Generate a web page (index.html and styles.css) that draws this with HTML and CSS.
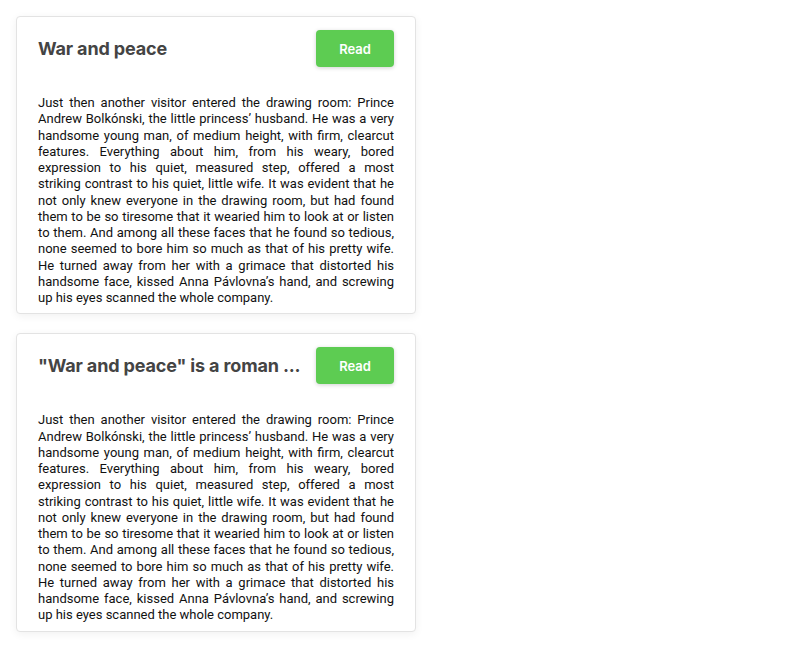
FILE: index.html
```html
<!DOCTYPE html>
<html>
<head>
<meta charset="utf-8">
<link rel="stylesheet" href="styles.css">
</head>
<body>
<div class="list">
  <div class="card">
    <div class="card-head">
      <h2 class="title">War and peace</h2>
      <button class="btn">Read</button>
    </div>
    <p class="text">Just then another visitor entered the drawing room: Prince Andrew Bolkónski, the little princess’ husband. He was a very handsome young man, of medium height, with firm, clearcut features. Everything about him, from his weary, bored expression to his quiet, measured step, offered a most striking contrast to his quiet, little wife. It was evident that he not only knew everyone in the drawing room, but had found them to be so tiresome that it wearied him to look at or listen to them. And among all these faces that he found so tedious, none seemed to bore him so much as that of his pretty wife. He turned away from her with a grimace that distorted his handsome face, kissed Anna Pávlovna’s hand, and screwing up his eyes scanned the whole company.</p>
  </div>
  <div class="card">
    <div class="card-head">
      <h2 class="title">"War and peace" is a roman ...</h2>
      <button class="btn">Read</button>
    </div>
    <p class="text">Just then another visitor entered the drawing room: Prince Andrew Bolkónski, the little princess’ husband. He was a very handsome young man, of medium height, with firm, clearcut features. Everything about him, from his weary, bored expression to his quiet, measured step, offered a most striking contrast to his quiet, little wife. It was evident that he not only knew everyone in the drawing room, but had found them to be so tiresome that it wearied him to look at or listen to them. And among all these faces that he found so tedious, none seemed to bore him so much as that of his pretty wife. He turned away from her with a grimace that distorted his handsome face, kissed Anna Pávlovna’s hand, and screwing up his eyes scanned the whole company.</p>
  </div>
</div>
</body>
</html>
```
FILE: styles.css
```css
html, body {
  margin: 0;
  padding: 0;
  background: #ffffff;
}
body {
  padding: 16px;
  font-family: Inter, "Noto Sans", sans-serif;
}
.list {
  display: flex;
  flex-direction: column;
  gap: 19px;
  width: 400px;
}
.card {
  box-sizing: border-box;
  width: 400px;
  border: 1px solid #e3e3e3;
  border-radius: 4px;
  background: #fff;
  box-shadow: 0 2px 8px rgba(0,0,0,0.06);
  padding: 13px 21px 7px 21px;
}
.card-head {
  display: flex;
  align-items: center;
  gap: 16px;
}
.title {
  flex: 1;
  min-width: 0;
  margin: 0;
  font-size: 18px;
  font-weight: 700;
  color: #444;
  letter-spacing: -0.15px;
  white-space: nowrap;
}
.btn {
  flex: none;
  width: 78px;
  height: 37px;
  border: none;
  border-radius: 4px;
  background: #5dcc52;
  color: #fff;
  font-family: Inter, "Noto Sans", sans-serif;
  font-size: 13px;
  font-weight: 600;
  box-shadow: 0 1px 4px rgba(0,0,0,0.18);
}
.text {
  margin: 28px 0 0 0;
  font-family: Roboto, "Noto Sans", sans-serif;
  font-size: 13px;
  line-height: 16.25px;
  color: #111;
  text-align: justify;
}
```
